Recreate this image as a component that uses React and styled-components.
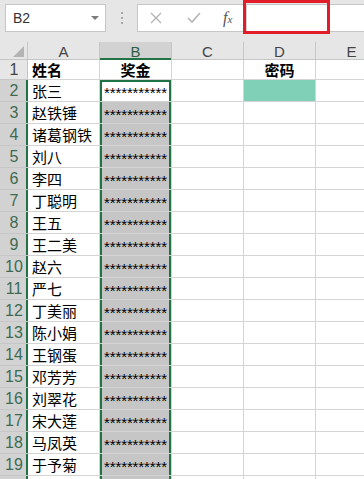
import React from "react";
import styled, {createGlobalStyle} from "styled-components";

const GREEN = "#217346";
const GRID = "#d4d4d4";

const GlobalStyle = createGlobalStyle`
  body {
    margin: 0;
    background: #ffffff;
    overflow: hidden;
  }
`;

const Page = styled.div`
  width: 364px;
  height: 479px;
  overflow: hidden;
  font-family: "Liberation Sans", Arial, sans-serif;
`;

const Toolbar = styled.div`
  display: flex;
  align-items: flex-start;
  height: 42px;
  padding: 4px 0 0 5px;
  box-sizing: border-box;
  background: #e6e6e6;
`;

const NameBox = styled.div`
  width: 101px;
  height: 28px;
  box-sizing: border-box;
  display: flex;
  align-items: center;
  justify-content: space-between;
  padding: 0 6px 0 7px;
  background: #fff;
  border: 1px solid #c6c6c6;
  font-size: 14px;
  color: #333;
`;

const Caret = styled.span`
  width: 0;
  height: 0;
  border-left: 4px solid transparent;
  border-right: 4px solid transparent;
  border-top: 4px solid #7a7a7a;
`;

const Grip = styled.div`
  width: 31px;
  height: 28px;
  display: flex;
  flex-direction: column;
  align-items: center;
  justify-content: center;
  gap: 3px;
  & span {
    width: 2px;
    height: 2px;
    background: #a8a8a8;
  }
`;

const FormulaBar = styled.div`
  flex: 1;
  height: 28px;
  box-sizing: border-box;
  display: flex;
  background: #fff;
  border: 1px solid #c6c6c6;
  border-right: none;
`;

const Tools = styled.div`
  width: 109px;
  display: flex;
  align-items: center;
  padding-left: 12px;
  gap: 25px;
  box-sizing: border-box;
  border-right: 1px solid #d0d0d0;
`;

const Fx = styled.span`
  font-family: "Liberation Serif", serif;
  font-style: italic;
  font-size: 16px;
  color: #555;
  margin-left: -3px;
  & small {
    font-size: 11px;
  }
`;

const Input = styled.div`
  flex: 1;
  position: relative;
`;

const Highlight = styled.div`
  position: absolute;
  left: -4px;
  top: -5px;
  width: 87px;
  height: 34px;
  box-sizing: border-box;
  border: 3px solid #e11d2a;
`;

const Sheet = styled.div`
  display: grid;
  grid-template-columns: 28px repeat(5, 72px);
  grid-template-rows: 18px 20px repeat(19, 22px);
`;

const Corner = styled.div`
  background: #e6e6e6;
  border-right: 1px solid #c6c6c6;
  border-bottom: 1px solid #c6c6c6;
  box-sizing: border-box;
  display: flex;
  align-items: flex-end;
  justify-content: flex-end;
  padding: 0 3px 2px 0;
`;

const ColHead = styled.div`
  background: ${p => (p.active ? "#d2d2d2" : "#e6e6e6")};
  color: ${p => (p.active ? "#2f5d43" : "#444")};
  border-right: 1px solid #c6c6c6;
  box-shadow: ${p => (p.active ? `inset 0 -2px ${GREEN}` : "inset 0 -1px #c6c6c6")};
  box-sizing: border-box;
  display: flex;
  align-items: center;
  justify-content: center;
  font-size: 15px;
`;

const RowHead = styled.div`
  background: ${p => (p.active ? "#d2d2d2" : "#e6e6e6")};
  color: ${p => (p.active ? "#3c6b52" : "#444")};
  border-bottom: 1px solid #c6c6c6;
  box-shadow: ${p => (p.active ? `inset -2px 0 ${GREEN}` : "inset -1px 0 #c6c6c6")};
  box-sizing: border-box;
  display: flex;
  align-items: center;
  justify-content: center;
  font-size: 16px;
`;

const Cell = styled.div`
  box-sizing: border-box;
  border-right: 1px solid ${GRID};
  border-bottom: 1px solid ${GRID};
  background: ${p => p.fill || "#fff"};
  display: flex;
  align-items: center;
  justify-content: ${p => (p.center ? "center" : "flex-start")};
  padding-left: ${p => (p.center ? "0" : "4px")};
  font-family: "Noto Sans CJK SC", sans-serif;
  font-size: 15px;
  font-weight: ${p => (p.bold ? 700 : 400)};
  color: #000;
  white-space: nowrap;
  overflow: hidden;
`;

const Masked = styled(Cell)`
  font-family: "Liberation Sans", Arial, sans-serif;
  font-size: 15px;
  padding: 4px 0 0 0;
  letter-spacing: -0.1px;
  box-shadow: inset 2px 0 ${GREEN}, inset -2px 0 ${GREEN}
    ${p => (p.first ? `, inset 0 2px ${GREEN}` : "")};
`;

const names = [
  "张三", "赵铁锤", "诸葛钢铁", "刘八", "李四", "丁聪明", "王五", "王二美", "赵六",
  "严七", "丁美丽", "陈小娟", "王钢蛋", "邓芳芳", "刘翠花", "宋大莲", "马凤英", "于予菊",
];

const cols = ["A", "B", "C", "D", "E"];

const CloseIcon = () => (
  <svg width="12" height="12" viewBox="0 0 12 12">
    <path d="M1 1 L11 11 M11 1 L1 11" stroke="#b5b5b5" strokeWidth="1.4" fill="none" />
  </svg>
);

const CheckIcon = () => (
  <svg width="14" height="12" viewBox="0 0 14 12">
    <path d="M1 6 L5 10 L13 1" stroke="#b5b5b5" strokeWidth="1.6" fill="none" />
  </svg>
);

const App = () => {
  return (
    <Page>
      <GlobalStyle />
      <Toolbar>
        <NameBox>
          B2
          <Caret />
        </NameBox>
        <Grip>
          <span /><span /><span />
        </Grip>
        <FormulaBar>
          <Tools>
            <CloseIcon />
            <CheckIcon />
            <Fx>f<small>x</small></Fx>
          </Tools>
          <Input>
            <Highlight />
          </Input>
        </FormulaBar>
      </Toolbar>
      <Sheet>
        <Corner>
          <svg width="11" height="11" viewBox="0 0 11 11">
            <polygon points="11,0 11,11 0,11" fill="#b4b4b4" />
          </svg>
        </Corner>
        {cols.map(c => (
          <ColHead key={c} active={c === "B"}>{c}</ColHead>
        ))}

        <RowHead>1</RowHead>
        <Cell bold>姓名</Cell>
        <Cell bold center>奖金</Cell>
        <Cell />
        <Cell bold center>密码</Cell>
        <Cell />

        {names.map((name, i) => (
          <React.Fragment key={i}>
            <RowHead active>{i + 2}</RowHead>
            <Cell>{name}</Cell>
            <Masked center first={i === 0} fill={i === 0 ? "#fff" : "#c6c6c6"}>***********</Masked>
            <Cell />
            <Cell fill={i === 0 ? "#7fd0b6" : undefined} />
            <Cell />
          </React.Fragment>
        ))}

        {/* row 20 is only a sliver at the bottom edge */}
        <RowHead active />
        <Cell />
        <Masked fill="#c6c6c6" />
        <Cell />
        <Cell />
        <Cell />
      </Sheet>
    </Page>
  );
};

export default App;
